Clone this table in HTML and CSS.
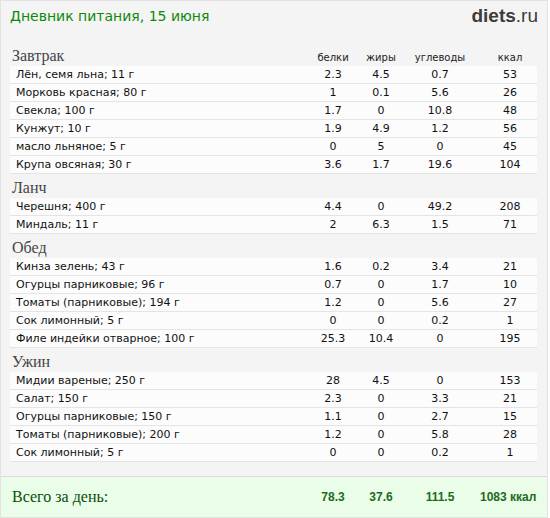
FILE: index.html
```html
<!DOCTYPE html>
<html lang="ru">
<head>
<meta charset="utf-8">
<link rel="stylesheet" href="styles.css">
</head>
<body>
<div class="page">
  <div class="head">
    <div class="title">Дневник питания, 15 июня</div>
    <div class="logo"><b>diets</b>.ru</div>
  </div>
  <table class="diary">
    <colgroup>
      <col class="c-name"><col class="c-b"><col class="c-z"><col class="c-u"><col class="c-k">
    </colgroup>
    <tbody>
      <tr class="sec first"><td class="sname">Завтрак</td><td class="ch">белки</td><td class="ch">жиры</td><td class="ch">углеводы</td><td class="ch kc">ккал</td></tr>
      <tr class="item"><td>Лён, семя льна; 11 г</td><td>2.3</td><td>4.5</td><td>0.7</td><td class="kc">53</td></tr>
      <tr class="item"><td>Морковь красная; 80 г</td><td>1</td><td>0.1</td><td>5.6</td><td class="kc">26</td></tr>
      <tr class="item"><td>Свекла; 100 г</td><td>1.7</td><td>0</td><td>10.8</td><td class="kc">48</td></tr>
      <tr class="item"><td>Кунжут; 10 г</td><td>1.9</td><td>4.9</td><td>1.2</td><td class="kc">56</td></tr>
      <tr class="item"><td>масло льняное; 5 г</td><td>0</td><td>5</td><td>0</td><td class="kc">45</td></tr>
      <tr class="item"><td>Крупа овсяная; 30 г</td><td>3.6</td><td>1.7</td><td>19.6</td><td class="kc">104</td></tr>

      <tr class="sec"><td class="sname" colspan="5">Ланч</td></tr>
      <tr class="item"><td>Черешня; 400 г</td><td>4.4</td><td>0</td><td>49.2</td><td class="kc">208</td></tr>
      <tr class="item"><td>Миндаль; 11 г</td><td>2</td><td>6.3</td><td>1.5</td><td class="kc">71</td></tr>

      <tr class="sec"><td class="sname" colspan="5">Обед</td></tr>
      <tr class="item"><td>Кинза зелень; 43 г</td><td>1.6</td><td>0.2</td><td>3.4</td><td class="kc">21</td></tr>
      <tr class="item"><td>Огурцы парниковые; 96 г</td><td>0.7</td><td>0</td><td>1.7</td><td class="kc">10</td></tr>
      <tr class="item"><td>Томаты (парниковые); 194 г</td><td>1.2</td><td>0</td><td>5.6</td><td class="kc">27</td></tr>
      <tr class="item"><td>Сок лимонный; 5 г</td><td>0</td><td>0</td><td>0.2</td><td class="kc">1</td></tr>
      <tr class="item"><td>Филе индейки отварное; 100 г</td><td>25.3</td><td>10.4</td><td>0</td><td class="kc">195</td></tr>

      <tr class="sec"><td class="sname" colspan="5">Ужин</td></tr>
      <tr class="item"><td>Мидии вареные; 250 г</td><td>28</td><td>4.5</td><td>0</td><td class="kc">153</td></tr>
      <tr class="item"><td>Салат; 150 г</td><td>2.3</td><td>0</td><td>3.3</td><td class="kc">21</td></tr>
      <tr class="item"><td>Огурцы парниковые; 150 г</td><td>1.1</td><td>0</td><td>2.7</td><td class="kc">15</td></tr>
      <tr class="item"><td>Томаты (парниковые); 200 г</td><td>1.2</td><td>0</td><td>5.8</td><td class="kc">28</td></tr>
      <tr class="item"><td>Сок лимонный; 5 г</td><td>0</td><td>0</td><td>0.2</td><td class="kc">1</td></tr>
    </tbody>
  </table>
  <div class="total">
    <div class="tlabel">Всего за день:</div>
    <div class="tv">78.3</div>
    <div class="tv">37.6</div>
    <div class="tv">111.5</div>
    <div class="tv tk">1083 ккал</div>
  </div>
</div>
</body>
</html>
```

FILE: styles.css
```css
html, body {
  margin: 0;
  padding: 0;
  background: #ffffff;
}
.page {
  width: 546px;
  height: 516px;
  background: #f4f4f4;
  border: 1px solid #e2e2e2;
  position: relative;
  overflow: hidden;
}
.head {
  display: flex;
  justify-content: space-between;
  align-items: flex-start;
  padding: 6px 9px 0 9px;
  height: 34px;
}
.title {
  font-family: "DejaVu Sans", Verdana, sans-serif;
  font-size: 14px;
  color: #0b8a0b;
  line-height: 18px;
}
.logo {
  font-family: "Liberation Sans", Arial, sans-serif;
  font-size: 19px;
  color: #3c3c3c;
  line-height: 22px;
  margin-top: -2px;
}
.logo b {
  font-weight: bold;
}
.diary {
  margin-left: 9px;
  width: 527px;
  border-collapse: collapse;
  table-layout: fixed;
  font-family: "DejaVu Sans", Verdana, sans-serif;
  font-size: 11px;
  color: #111;
}
.c-name { width: 298px; }
.c-b { width: 50px; }
.c-z { width: 46px; }
.c-u { width: 72px; }
.c-k { width: 61px; }
.diary td {
  padding: 0;
}
.item td {
  background: #fcfcfc;
  border-bottom: 1px solid #e4e4e4;
  padding: 2px 0;
  text-align: center;
  line-height: 13px;
  white-space: nowrap;
}
.item td:first-child {
  text-align: left;
  padding-left: 6px;
}
.item td.kc,
.sec td.kc {
  padding-left: 7px;
}
.sec td {
  vertical-align: baseline;
  padding-top: 6px;
  padding-bottom: 3px;
}
.sec.first td {
  padding-top: 7px;
  padding-bottom: 3px;
}
.sname {
  font-family: "Liberation Serif", "Times New Roman", serif;
  font-size: 16px;
  color: #444;
  padding-left: 2px !important;
  line-height: 15px;
}
.ch {
  text-align: center;
  font-size: 10px;
  color: #222;
}
.total {
  position: absolute;
  left: 0;
  right: 0;
  bottom: 0;
  height: 40px;
  background: #e9fde9;
  border-top: 1px solid #dcdcdc;
  display: grid;
  grid-template-columns: 307px 50px 46px 72px 71px;
  align-items: center;
}
.tlabel {
  font-family: "Liberation Serif", "Times New Roman", serif;
  font-size: 16px;
  color: #0b4d0b;
  padding-left: 11px;
}
.tv {
  font-family: "Liberation Sans", Arial, sans-serif;
  font-weight: bold;
  font-size: 12px;
  color: #1d6a1d;
  text-align: center;
  white-space: nowrap;
}
.tv.tk {
  text-align: left;
  padding-left: 4px;
}
```
